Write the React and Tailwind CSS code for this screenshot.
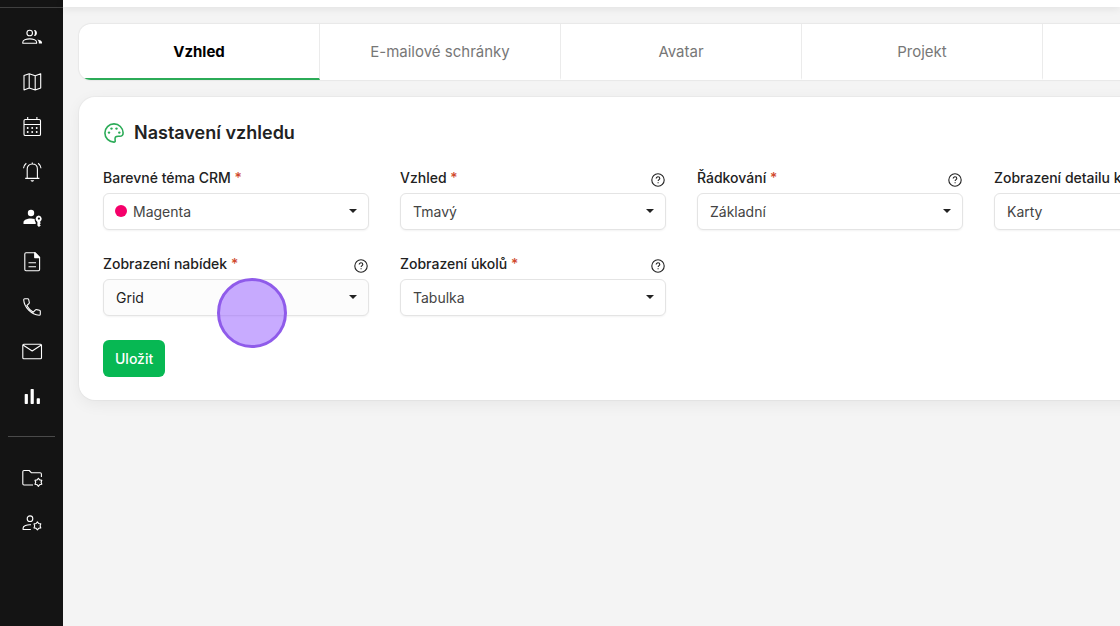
import { useState } from "react";

const TABS = ["Vzhled", "E-mailové schránky", "Avatar", "Projekt", "Profil"];

const FIELDS = [
  { id: "theme", label: "Barevné téma CRM", options: ["Magenta", "Zelená", "Modrá"], swatch: true },
  { id: "appearance", label: "Vzhled", options: ["Tmavý", "Světlý"], help: true },
  { id: "density", label: "Řádkování", options: ["Základní", "Kompaktní"], help: true },
  { id: "detail", label: "Zobrazení detailu kontaktu", options: ["Karty", "Seznam"], help: true },
  { id: "offers", label: "Zobrazení nabídek", options: ["Grid", "Tabulka"], help: true, hovered: true },
  { id: "tasks", label: "Zobrazení úkolů", options: ["Tabulka", "Grid"], help: true },
];

function Gear({ x, y }) {
  return (
    <g transform={`translate(${x} ${y})`}>
      <path d="M0-4 1.3-2.4 3.4-2 2.7 0 3.4 2 1.3 2.4 0 4-1.3 2.4-3.4 2-2.7 0-3.4-2-1.3-2.4Z" />
    </g>
  );
}

const MAIN_NAV = [
  {
    label: "Kontakty",
    icon: (
      <>
        <circle cx="9.7" cy="8" r="2.8" />
        <path d="M2.8 18.3v-1.1c0-2 3.4-3.3 6.9-3.3s6.9 1.3 6.9 3.3v1.1Z" />
        <path d="M14 5c3.8-.8 4 6.6 0 5.9 1.2-1.7 1.2-4.2 0-5.9ZM17.200 14.400c3 .4 4.800 1.500 4.800 3v1.200h-3.200c.3-1.800-.4-3.200-1.600-4.200Z" fill="currentColor" stroke="none" />
      </>
    ),
  },
  {
    label: "Mapa",
    icon: <path d="m4 5.6 5.2-1.9 6 2 5.5-1.9v14.3l-5.5 1.9-6-2L4 19.9ZM9.2 3.7V18M15.2 5.7V20" />,
  },
  {
    label: "Kalendář",
    icon: (
      <>
        <rect x="4" y="4.5" width="16.5" height="16" rx="1.3" />
        <path d="M4 9.5h16.5M7.7 2v2.5M16.9 2v2.5" />
        <path d="M7.7 13h.01M12.2 13h.01M16.7 13h.01M7.7 17h.01M12.2 17h.01M16.7 17h.01" strokeWidth="1.9" strokeLinecap="round" />
      </>
    ),
  },
  {
    label: "Upozornění",
    icon: (
      <>
        <path d="M5.2 18.4h14.2M7.2 18.4V9c0-3 2-5 5.1-5s5.1 2 5.1 5v9.4M12.3 4V2.5M3.5 8.2C3.8 6 4.7 4.6 6.3 3.3M21 8.2c-.3-2.2-1.2-3.6-2.8-4.9" />
        <path d="M10.5 20.2h3.6c-.3 1.900-3.3 1.900-3.600 0Z" fill="currentColor" stroke="none" />
      </>
    ),
  },
  {
    label: "Oprávnění",
    icon: (
      <g fill="currentColor" stroke="none">
        <circle cx="11" cy="8" r="3.2" />
        <path d="M3.5 19v-1.8c0-2 3.3-3.7 7.5-3.7 1.3 0 2.6.2 3.7.5-.1 1.7.4 2.7 1 3.4V19Z" />
        <path d="M18.9 10.6a3.4 3.4 0 0 0-1.5 6.4v3.5l1.5 1.5 1.9-1.6-1.1-1.1 1.1-1.1-.8-1.3a3.4 3.4 0 0 0-1.1-6.3Zm0 1.9a1.1 1.1 0 1 1 0 2.2 1.1 1.1 0 0 1 0-2.2Z" fillRule="evenodd" />
      </g>
    ),
  },
  {
    label: "Dokumenty",
    icon: (
      <>
        <path d="M6 2.7h9l4.6 4.6v12.2c0 .7-.5 1.2-1.2 1.2H6c-.7 0-1.2-.5-1.2-1.2V3.9c0-.7.5-1.2 1.2-1.2ZM8.5 12.7H16M8.5 16.7H16" />
        <path d="M14.7 2.7v4.9h4.9Z" fill="currentColor" />
      </>
    ),
  },
  {
    label: "Telefon",
    icon: <path d="M4.7 3.7h3c.5 0 .9.3 1 .8l.6 3c.1.4 0 .7-.3 1L6.8 10.6c1.5 2.8 3.6 5 6.5 6.6l2.2-2.3c.3-.3.7-.4 1.1-.3l2.9.6c.5.1.8.5.8 1v3c0 .6-.5 1-1.1 1C11.2 19.5 4.2 12.5 3.7 4.8c0-.6.4-1.1 1-1.1Z" />,
  },
  {
    label: "E-maily",
    icon: (
      <>
        <rect x="2.8" y="4.3" width="18.7" height="14.4" rx="1" />
        <path d="m3 5 9.2 6L21.3 5" />
      </>
    ),
  },
  {
    label: "Statistiky",
    icon: (
      <g fill="currentColor" stroke="none">
        <rect x="4.7" y="9" width="3.2" height="10" rx=".7" />
        <rect x="10.6" y="4" width="3.2" height="15" rx=".7" />
        <rect x="16.7" y="13.2" width="3.2" height="5.8" rx=".7" />
      </g>
    ),
  },
];

const ADMIN_NAV = [
  {
    label: "Nastavení složek",
    icon: (
      <>
        <path d="M13 19H4c-.8 0-1.2-.5-1.2-1.2V5.7c0-.7.5-1.2 1.2-1.2h5.2l2.3 2.3h8.6c.8 0 1.3.5 1.3 1.2v3" />
        <Gear x={18.4} y={16.3} />
      </>
    ),
  },
  {
    label: "Nastavení uživatele",
    icon: (
      <>
        <circle cx="10" cy="7.7" r="2.8" />
        <path d="M11 13.8c-4.2-.4-7.9 1.2-7.9 3.3v1.4h7.7" />
        <Gear x={17.4} y={14.9} />
      </>
    ),
  },
];

function NavItem({ label, icon }) {
  return (
    <a href="#" aria-label={label} className="flex h-[45px] items-center pl-5 text-white">
      <svg viewBox="0 0 24 24" className="size-6" fill="none" stroke="currentColor" strokeWidth="1.1" strokeLinejoin="round" aria-hidden="true">
        {icon}
      </svg>
    </a>
  );
}

function Sidebar() {
  return (
    <nav className="w-[63px] shrink-0 bg-[#141414]">
      <div className="h-2 border-b border-[#404040]" />
      <div className="pt-1.5">
        {MAIN_NAV.map((item) => (
          <NavItem key={item.label} {...item} />
        ))}
      </div>
      <hr className="mx-2 mt-[17px] mb-[18px] border-[#4a4a4a]" />
      {ADMIN_NAV.map((item) => (
        <NavItem key={item.label} {...item} />
      ))}
    </nav>
  );
}

function PaletteIcon() {
  return (
    <svg viewBox="0 0 20 20" className="size-5 text-[#2bab57]" fill="none" stroke="currentColor" strokeWidth="1.6" strokeLinejoin="round" aria-hidden="true">
      <path d="M10 .9a9.1 9.1 0 1 0 0 18.2c.8 0 1.3-.5 1.2-1.3-.2-1.6-.5-2.9.3-3.8.9-1 2.3-.8 4-.7 2.3.1 3.7-1.1 3.6-3.5C18.9 4.800 15 .9 10 .9Z" />
      <g fill="currentColor" stroke="none">
        <circle cx="5" cy="9.6" r="1.2" />
        <circle cx="7.5" cy="5.6" r="1.2" />
        <circle cx="12.5" cy="5.6" r="1.2" />
        <circle cx="15.3" cy="9.6" r="1.2" />
      </g>
    </svg>
  );
}

function HelpIcon() {
  return (
    <svg viewBox="0 0 14 14" className="size-3.5" fill="none" stroke="currentColor" strokeWidth="1.1" aria-hidden="true">
      <circle cx="7" cy="7" r="6.2" />
      <path d="M5.2 5.6c0-1.1.8-1.8 1.8-1.8s1.8.7 1.8 1.6c0 1.2-1.7 1.3-1.7 2.7M7.1 9.2v1.1" />
    </svg>
  );
}

function SelectField({ id, label, options, help, swatch, hovered }) {
  const [value, setValue] = useState(options[0]);

  return (
    <div>
      <div className="mb-1.5 flex h-5 justify-between">
        <label htmlFor={id} className="text-sm/[22px] font-medium whitespace-nowrap text-[#222222]">
          {label} <span className="text-[#d0482c]">*</span>
        </label>
        {help ? (
          <button type="button" aria-label={`Nápověda: ${label}`} className="mr-px shrink-0 self-end text-[#222222]">
            <HelpIcon />
          </button>
        ) : null}
      </div>
      <div className="relative">
        {swatch ? <span className="absolute top-3 left-3 size-3 rounded-full bg-[#f5006a]" /> : null}
        <select
          id={id}
          value={value}
          onChange={(e) => setValue(e.target.value)}
          className={`block h-[37px] w-full appearance-none rounded-md border border-[#e4e4e4] pr-8 text-sm shadow-xs outline-none ${
            swatch ? "pl-[29px]" : "pl-3"
          } ${hovered ? "bg-[#fcfcfc] text-[#222222]" : "bg-white text-[#444444]"}`}
        >
          {options.map((option) => (
            <option key={option}>{option}</option>
          ))}
        </select>
        <svg viewBox="0 0 8 4" className="pointer-events-none absolute top-4 right-3 h-1 w-2 fill-[#222222]" aria-hidden="true">
          <path d="M0 0h8L4 4Z" />
        </svg>
      </div>
    </div>
  );
}

export default function App() {
  const [activeTab, setActiveTab] = useState("Vzhled");

  return (
    <div className="relative flex min-h-screen overflow-hidden bg-[#f4f4f4] font-['Inter',sans-serif]">
      <Sidebar />
      <div className="min-w-0 flex-1">
        <header className="h-[7px] bg-white shadow-[0_1px_8px_rgba(0,0,0,0.1)]" />
        <main className="min-w-[1237px] px-4 pt-[17px]">
          <div role="tablist" className="grid grid-cols-5 overflow-hidden rounded-xl bg-white shadow-[0_0_1px_1px_rgba(0,0,0,0.05)]">
            {TABS.map((tab) => (
              <button
                key={tab}
                type="button"
                role="tab"
                aria-selected={activeTab === tab}
                onClick={() => setActiveTab(tab)}
                className={`h-14 border-r border-b-2 border-r-[#ebebeb] pt-0.5 text-[15px] last:border-r-0 ${
                  activeTab === tab
                    ? "border-b-[#2bab57] font-bold text-black"
                    : "border-b-transparent text-[#777777]"
                }`}
              >
                {tab}
              </button>
            ))}
          </div>

          <form
            onSubmit={(e) => e.preventDefault()}
            className="mt-[17px] rounded-2xl bg-white px-6 pt-[22px] pb-[23px] shadow-[0_0_1px_1px_rgba(0,0,0,0.03),0_4px_16px_rgba(0,0,0,0.06)]"
          >
            <div className="mb-5 flex items-center gap-2.5 pl-px">
              <PaletteIcon />
              <h1 className="text-lg font-semibold text-[#222222]">Nastavení vzhledu</h1>
            </div>
            <div className="grid grid-cols-4 gap-x-[31px] gap-y-[23px]">
              {FIELDS.map((field) => (
                <SelectField key={field.id} {...field} />
              ))}
            </div>
            <button type="submit" className="mt-6 h-[37px] rounded-md bg-[#07b853] px-3 text-sm font-medium text-white">
              Uložit
            </button>
          </form>
        </main>
      </div>

      {/* click marker */}
      <div className="pointer-events-none absolute top-[278px] left-[217px] size-[70px] rounded-full border-3 border-[#8f5bea] bg-[#9b66ff]/55" />
    </div>
  );
}
